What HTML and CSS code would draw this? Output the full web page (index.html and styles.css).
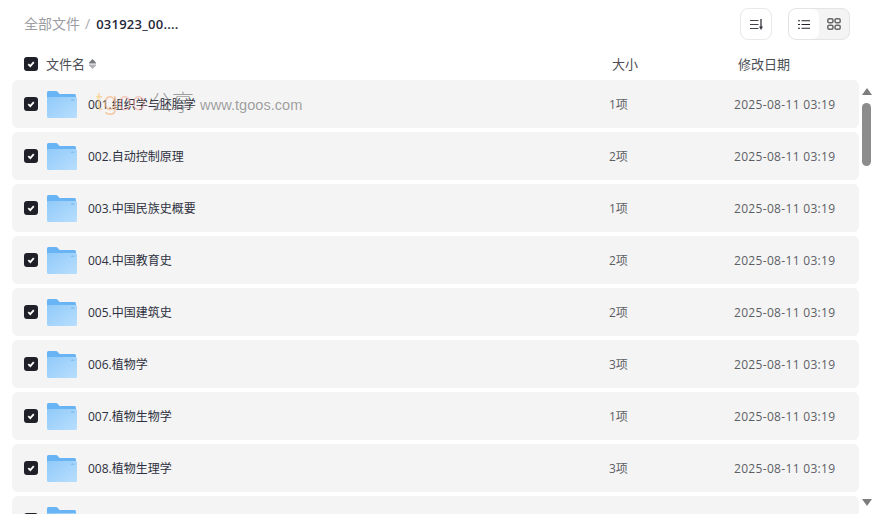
FILE: index.html
```html
<!DOCTYPE html>
<html lang="zh-CN">
<head>
    <meta charset="UTF-8">
    <title>全部文件</title>
    <link rel="stylesheet" href="styles.css">
</head>
<body>
    <svg class="defs" width="0" height="0">
        <defs>
            <linearGradient id="folderFront" x1="0" y1="0" x2="1" y2="1">
                <stop offset="0" stop-color="#90caf9"/>
                <stop offset="1" stop-color="#b8defe"/>
            </linearGradient>
            <symbol id="folder" viewBox="0 0 30 28">
                <path d="M0 2.500a1.500 1.500 0 0 1 1.500-1.500h7.500a2 2 0 0 1 1.400.6L12.500 4h15a1.500 1.500 0 0 1 1.500 1.500V11H0z" fill="#68b4f4"/>
                <path d="M0 7h28.500a1.500 1.500 0 0 1 1.500 1.500v18a1.500 1.500 0 0 1-1.500 1.500H1.500a1.500 1.500 0 0 1-1.500-1.500z" fill="url(#folderFront)"/>
                <path d="M24 9.500h3.500v1.500H24z" fill="#82c1f6"/>
            </symbol>
            <symbol id="check" viewBox="0 0 14 14">
                <path d="M4.300 7.200l2 2 3.500-4" fill="none" stroke="#fff" stroke-width="1.800"/>
            </symbol>
        </defs>
    </svg>

    <div class="page">
        <div class="toolbar">
            <div class="crumbs">
                <span class="crumb-root">全部文件</span>
                <span class="crumb-sep">/</span>
                <span class="crumb-current">031923_00....</span>
            </div>
            <div class="tools">
                <button class="btn-sort">
                    <svg width="13" height="11" viewBox="0 0 13 11"><path d="M0 1.500h8.500M0 5.500h8.500M0 9.500h8.500" stroke="#44464d" stroke-width="1.200"/><path d="M11 0v8" stroke="#33353c" stroke-width="1.300"/><path d="M9 7.500h4L11 11z" fill="#33353c"/></svg>
                </button>
                <div class="view-switch">
                    <button class="view-btn active">
                        <svg width="12" height="9" viewBox="0 0 12 9"><path d="M0 .75h2M0 4.500h2M0 8.250h2" stroke="#22242b" stroke-width="1.200"/><path d="M3.500 .75H12M3.500 4.500H12M3.500 8.250H12" stroke="#22242b" stroke-width="1.200"/></svg>
                    </button>
                    <button class="view-btn">
                        <svg width="14" height="12" viewBox="0 0 14 12"><g fill="none" stroke="#666" stroke-width="1.500"><rect x="0.800" y="0.800" width="5.200" height="4" rx="1.500"/><rect x="8" y="0.800" width="5.200" height="4" rx="1.500"/><rect x="0.800" y="7.200" width="5.200" height="4" rx="1.500"/><rect x="8" y="7.200" width="5.200" height="4" rx="1.500"/></g></svg>
                    </button>
                </div>
            </div>
        </div>

        <div class="list-head">
            <span class="checkbox"><svg width="14" height="14"><use href="#check"/></svg></span>
            <span class="col-name">文件名
                <svg class="sort-arrows" width="7" height="10" viewBox="0 0 7 10"><path d="M3.500 0L7 3.500V4.500H0V3.500z" fill="#77797f"/><path d="M3.500 10L0 6.500V5.500h7v1z" fill="#b0b2b6"/></svg>
            </span>
            <span class="col-size">大小</span>
            <span class="col-date">修改日期</span>
        </div>

        <div class="list-wrap">
            <div class="rows">
                <div class="row">
                    <span class="checkbox"><svg width="14" height="14"><use href="#check"/></svg></span>
                    <svg class="folder" width="30" height="28"><use href="#folder"/></svg>
                    <span class="name">001.组织学与胚胎学</span>
                    <span class="size">1项</span>
                    <span class="date">2025-08-11 03:19</span>
                </div>
                <div class="row">
                    <span class="checkbox"><svg width="14" height="14"><use href="#check"/></svg></span>
                    <svg class="folder" width="30" height="28"><use href="#folder"/></svg>
                    <span class="name">002.自动控制原理</span>
                    <span class="size">2项</span>
                    <span class="date">2025-08-11 03:19</span>
                </div>
                <div class="row">
                    <span class="checkbox"><svg width="14" height="14"><use href="#check"/></svg></span>
                    <svg class="folder" width="30" height="28"><use href="#folder"/></svg>
                    <span class="name">003.中国民族史概要</span>
                    <span class="size">1项</span>
                    <span class="date">2025-08-11 03:19</span>
                </div>
                <div class="row">
                    <span class="checkbox"><svg width="14" height="14"><use href="#check"/></svg></span>
                    <svg class="folder" width="30" height="28"><use href="#folder"/></svg>
                    <span class="name">004.中国教育史</span>
                    <span class="size">2项</span>
                    <span class="date">2025-08-11 03:19</span>
                </div>
                <div class="row">
                    <span class="checkbox"><svg width="14" height="14"><use href="#check"/></svg></span>
                    <svg class="folder" width="30" height="28"><use href="#folder"/></svg>
                    <span class="name">005.中国建筑史</span>
                    <span class="size">2项</span>
                    <span class="date">2025-08-11 03:19</span>
                </div>
                <div class="row">
                    <span class="checkbox"><svg width="14" height="14"><use href="#check"/></svg></span>
                    <svg class="folder" width="30" height="28"><use href="#folder"/></svg>
                    <span class="name">006.植物学</span>
                    <span class="size">3项</span>
                    <span class="date">2025-08-11 03:19</span>
                </div>
                <div class="row">
                    <span class="checkbox"><svg width="14" height="14"><use href="#check"/></svg></span>
                    <svg class="folder" width="30" height="28"><use href="#folder"/></svg>
                    <span class="name">007.植物生物学</span>
                    <span class="size">1项</span>
                    <span class="date">2025-08-11 03:19</span>
                </div>
                <div class="row">
                    <span class="checkbox"><svg width="14" height="14"><use href="#check"/></svg></span>
                    <svg class="folder" width="30" height="28"><use href="#folder"/></svg>
                    <span class="name">008.植物生理学</span>
                    <span class="size">3项</span>
                    <span class="date">2025-08-11 03:19</span>
                </div>
                <div class="row">
                    <span class="checkbox"><svg width="14" height="14"><use href="#check"/></svg></span>
                    <svg class="folder" width="30" height="28"><use href="#folder"/></svg>
                </div>
            </div>
            <div class="scrollbar">
                <span class="arrow-up"></span>
                <div class="thumb"></div>
                <span class="arrow-down"></span>
            </div>
        </div>
    </div>

    <div class="watermark"><span class="wm-t">t</span><span class="wm-g">g</span><span class="wm-o">oo</span><span class="wm-cn">公享</span><span class="wm-url">www.tgoos.com</span></div>
</body>
</html>
```

FILE: styles.css
```css
html, body {
    height: 100%;
}
body {
    margin: 0;
    background-color: #fff;
    font-family: "Open Sans", "Noto Sans CJK SC", sans-serif;
    color: #25262b;
    overflow: hidden;
}
.defs {
    position: absolute;
}
.page {
    height: 514px;
    display: flex;
    flex-direction: column;
}
.toolbar {
    height: 48px;
    flex: none;
    padding: 0 24px;
    display: flex;
    align-items: center;
    justify-content: space-between;
}
.crumbs {
    display: flex;
    align-items: center;
    font-size: 14px;
    line-height: 20px;
}
.crumb-root {
    color: #9c9da3;
}
.crumb-sep {
    color: #a9abb0;
    margin: 0 6px 0 5px;
}
.crumb-current {
    color: #25283a;
    font-weight: 600;
    font-size: 13px;
    letter-spacing: 0.25px;
}
.tools {
    display: flex;
    gap: 16px;
}
button {
    padding: 0;
    border: none;
    background: none;
    display: flex;
    align-items: center;
    justify-content: center;
}
.btn-sort {
    width: 32px;
    height: 32px;
    box-sizing: border-box;
    border: 1px solid #e8e8ea;
    border-radius: 8px;
    background-color: #fff;
}
.view-switch {
    width: 62px;
    height: 32px;
    box-sizing: border-box;
    border: 1px solid #e4e4e6;
    border-radius: 8px;
    background-color: #f4f4f5;
    display: flex;
    overflow: hidden;
}
.view-btn {
    width: 30px;
    height: 30px;
}
.view-btn.active {
    background-color: #fff;
    border-radius: 7px;
}
.list-head {
    height: 32px;
    flex: none;
    padding-left: 24px;
    display: flex;
    align-items: center;
    font-size: 13px;
    color: #4c4e55;
}
.list-head > span {
    margin-bottom: 2px;
}
.list-head > .checkbox {
    margin-bottom: 0;
}
.checkbox {
    width: 14px;
    height: 14px;
    flex: none;
    background-color: #1f2028;
    border-radius: 3px;
    display: block;
}
.checkbox svg {
    display: block;
}
.col-name {
    margin-left: 8px;
    width: 566px;
    display: flex;
    align-items: center;
    gap: 4px;
}
.sort-arrows {
    margin-top: 2px;
}
.col-size {
    width: 126px;
}
.list-wrap {
    flex: 1;
    min-height: 0;
    padding-left: 12px;
    display: flex;
    overflow: hidden;
}
.rows {
    width: 847px;
    flex: none;
    display: flex;
    flex-direction: column;
    gap: 4px;
}
.row {
    height: 48px;
    flex: none;
    box-sizing: border-box;
    padding-left: 12px;
    background-color: #f4f4f4;
    border-radius: 6px;
    display: flex;
    align-items: center;
    font-size: 12px;
    color: #2d3040;
}
.folder {
    margin-left: 9px;
    flex: none;
}
.name {
    margin-left: 11px;
    width: 521px;
}
.size {
    width: 125px;
    color: #5d5f66;
}
.date {
    color: #5d5f66;
    letter-spacing: 0.32px;
}
.scrollbar {
    width: 9px;
    margin-left: 3px;
    flex: none;
    display: flex;
    flex-direction: column;
    align-items: center;
    position: relative;
}
.arrow-up {
    margin-top: 8px;
    border: 5px solid transparent;
    border-top: none;
    border-bottom: 7px solid #7d7d7d;
}
.thumb {
    width: 9px;
    height: 63px;
    margin-top: 8px;
    background-color: #8c8c8c;
    border-radius: 5px;
}
.arrow-down {
    position: absolute;
    top: 419px;
    border: 5px solid transparent;
    border-bottom: none;
    border-top: 7px solid #7d7d7d;
}
.watermark {
    position: absolute;
    left: 96px;
    top: 87px;
    height: 28px;
    display: flex;
    align-items: baseline;
    line-height: 28px;
    pointer-events: none;
    white-space: nowrap;
}
.wm-t, .wm-g, .wm-o {
    font-size: 24px;
    font-family: "Inter", sans-serif;
    font-weight: 300;
}
.wm-t {
    color: rgba(245, 205, 120, 0.7);
}
.wm-g {
    color: rgba(245, 175, 120, 0.65);
}
.wm-o {
    color: rgba(245, 165, 150, 0.55);
}
.wm-cn {
    font-size: 22px;
    color: rgba(120, 120, 120, 0.7);
    font-weight: 300;
    margin-left: 4px;
}
.wm-url {
    font-family: "Liberation Sans", sans-serif;
    font-size: 14.600px;
    color: rgba(110, 110, 110, 0.65);
    margin-left: 6px;
}
```
